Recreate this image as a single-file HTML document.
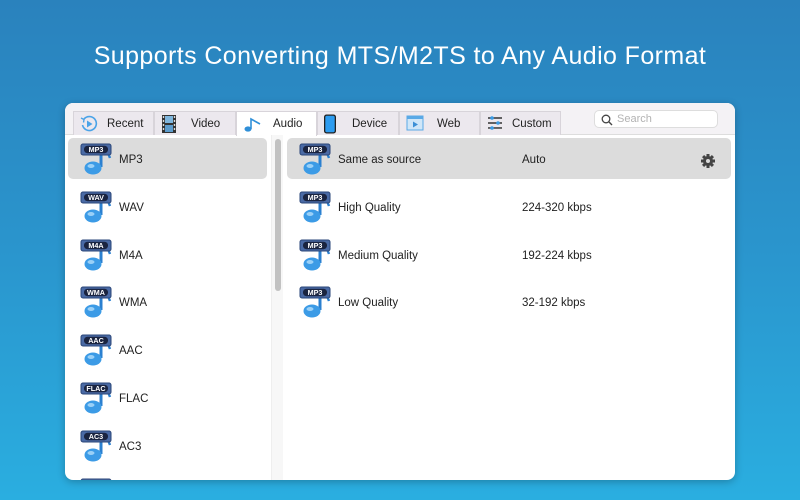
<!DOCTYPE html>
<html><head><meta charset="utf-8"><style>
*{margin:0;padding:0;box-sizing:border-box}
body{width:800px;height:500px;overflow:hidden;font-family:"Liberation Sans",sans-serif;background:linear-gradient(180deg,#2a82bd 0%,#2a95cd 50%,#2aaee0 100%);position:relative}
h1{position:absolute;top:42px;left:0;width:800px;text-align:center;color:#fff;font-weight:400;font-size:25px;letter-spacing:0.4px}
.win{position:absolute;left:65px;top:103px;width:670px;height:377px;background:#fff;border-radius:8px;overflow:hidden;box-shadow:0 2px 8px rgba(0,0,0,.25)}
.bar{position:absolute;left:0;top:0;width:670px;height:32px;background:#f4f2f5;border-bottom:1px solid #ddd}
.tab{position:absolute;top:8px;height:24px;background:#ece8ee;border:1px solid #d8d4da;border-bottom:none;font-size:11.5px;color:#222;line-height:25px}
.tab.on{background:#fff;height:25px}
.tab span{position:absolute}
.tab svg{position:absolute;top:3px;left:6px}
.search{position:absolute;left:529px;top:7px;width:124px;height:18px;background:#fff;border:1px solid #ddd;border-radius:5px;font-size:11px;color:#b3b3b3;line-height:17px;padding-left:22px}
.search svg{position:absolute;left:6px;top:3px}
.left{position:absolute;left:0;top:32px;width:218px;height:345px;border-right:1px solid #e5e5e5}
.sb{position:absolute;left:206px;top:0;width:12px;height:345px;background:#f7f7f7;border-left:1px solid #eee}
.sb div{position:absolute;left:3px;top:4px;width:6px;height:152px;background:#c2c2c2;border-radius:3px}
.row{position:absolute;height:41px;font-size:11.5px;color:#222;line-height:45px}
.row.sel{background:#dcdcdc;border-radius:5px}
.ic{position:absolute;top:4px;width:34px;height:34px}
.right{position:absolute;left:219px;top:32px;width:451px;height:345px}
</style></head><body>
<h1>Supports Converting MTS/M2TS to Any Audio Format</h1>
<div class="win">
<div class="bar">
 <div class="tab" style="left:8px;width:81px"><svg width="18" height="18" viewBox="0 0 18 18"><path d="M4 4A7 7 0 1 1 2.5 10" fill="none" stroke="#4aa3e8" stroke-width="1.6"/><path d="M1 3l3 1.5-0.5 3" fill="none" stroke="#4aa3e8" stroke-width="1.4"/><path d="M7 5.5v7l5.5-3.5z" fill="#4aa3e8"/></svg><span style="left:33px">Recent</span></div>
 <div class="tab" style="left:89px;width:82px"><svg width="16" height="18" viewBox="0 0 16 18"><rect x="1" y="0" width="14" height="18" fill="#333"/><rect x="4" y="1" width="8" height="7" fill="#7fb6dd"/><rect x="4" y="10" width="8" height="7" fill="#5d9ccc"/><g fill="#ddd"><rect x="1.8" y="1" width="1.4" height="2"/><rect x="1.8" y="5" width="1.4" height="2"/><rect x="1.8" y="9" width="1.4" height="2"/><rect x="1.8" y="13" width="1.4" height="2"/><rect x="12.8" y="1" width="1.4" height="2"/><rect x="12.8" y="5" width="1.4" height="2"/><rect x="12.8" y="9" width="1.4" height="2"/><rect x="12.8" y="13" width="1.4" height="2"/></g></svg><span style="left:36px">Video</span></div>
 <div class="tab on" style="left:171px;width:81px"><svg width="22" height="18" viewBox="0 0 22 18"><path d="M8 14V4l9 5" fill="none" stroke="#2f8fd8" stroke-width="1.6"/><ellipse cx="5" cy="14" rx="3.5" ry="2.6" fill="#2f8fd8"/></svg><span style="left:36px">Audio</span></div>
 <div class="tab" style="left:252px;width:82px"><svg width="14" height="20" viewBox="0 0 14 20" style="top:2px;left:5px"><rect x="1" y="0.5" width="12" height="19" rx="2.5" fill="#222"/><rect x="2.3" y="1.8" width="9.4" height="16.4" rx="1.5" fill="#2d9cf0"/></svg><span style="left:34px">Device</span></div>
 <div class="tab" style="left:334px;width:81px"><svg width="18" height="16" viewBox="0 0 18 16"><rect x="1" y="1" width="16" height="14" fill="#cfe6f8" stroke="#5aa9e6"/><rect x="1" y="1" width="16" height="3" fill="#5aa9e6"/><path d="M7 6.5v6l5-3z" fill="#3b8fd6"/></svg><span style="left:37px">Web</span></div>
 <div class="tab" style="left:415px;width:81px"><svg width="16" height="16" viewBox="0 0 16 16"><g stroke="#333" stroke-width="1.4"><line x1="1" y1="3" x2="15" y2="3"/><line x1="1" y1="8" x2="15" y2="8"/><line x1="1" y1="13" x2="15" y2="13"/></g><g fill="#3a9be6"><circle cx="5" cy="3" r="1.8"/><circle cx="11" cy="8" r="1.8"/><circle cx="5" cy="13" r="1.8"/></g></svg><span style="left:31px">Custom</span></div>
 <div class="search"><svg width="12" height="12" viewBox="0 0 12 12"><circle cx="5" cy="5" r="3.8" fill="none" stroke="#444" stroke-width="1.3"/><line x1="7.8" y1="7.8" x2="11" y2="11" stroke="#444" stroke-width="1.4"/></svg>Search</div>
</div>
<div class="left">
 <div class="sb"><div></div></div>
 <div class="row sel" style="left:3px;top:3px;width:199px"></div>
 <div id="L"></div>
</div>
<div class="right">
 <div class="row sel" style="left:3px;top:3px;width:444px"></div>
 <div id="R"></div>
 <svg style="position:absolute;left:417px;top:19px" width="14" height="14" viewBox="0 0 14 14"><g fill="#444"><circle cx="7" cy="7" r="5"/><g transform="translate(7 7)"><rect x="-1.5" y="-7" width="3" height="14"/><rect x="-1.5" y="-7" width="3" height="14" transform="rotate(45)"/><rect x="-1.5" y="-7" width="3" height="14" transform="rotate(90)"/><rect x="-1.5" y="-7" width="3" height="14" transform="rotate(135)"/></g></g><circle cx="7" cy="7" r="2" fill="#dcdcdc"/></svg>
</div>
</div>
<script>
function icon(lbl){return '<svg class="ic" viewBox="0 0 34 34"><path d="M21 6 V25" stroke="#2b80d0" stroke-width="3"/><path d="M21 6 q7 3 9 10" stroke="#2b80d0" stroke-width="2.4" fill="none"/><ellipse cx="13" cy="26" rx="8.5" ry="6.5" fill="#3c9be6"/><ellipse cx="11" cy="24" rx="3.5" ry="2" fill="#9ad0f7"/><rect x="1" y="2" width="30" height="11" rx="2" fill="#4a6aa5" stroke="#2a4578"/><rect x="4" y="3.7" width="24" height="7.5" rx="3.5" fill="#1a2440"/><text x="16" y="10.2" font-size="7.2" font-weight="bold" fill="#fff" text-anchor="middle" font-family="Liberation Sans">'+lbl+'</text></svg>';}
var L=['MP3','WAV','M4A','WMA','AAC','FLAC','AC3','OGG'],h='';
L.forEach(function(n,i){h+='<div class="row" style="left:15px;top:'+(3+i*47.8)+'px;width:180px">'+icon(n)+'<span style="position:absolute;left:39px">'+n+'</span></div>';});
document.getElementById('L').innerHTML=h;
var R=[['Same as source','Auto'],['High Quality','224-320 kbps'],['Medium Quality','192-224 kbps'],['Low Quality','32-192 kbps']];h='';
R.forEach(function(r,i){h+='<div class="row" style="left:15px;top:'+(3+i*47.8)+'px;width:400px">'+icon('MP3')+'<span style="position:absolute;left:39px">'+r[0]+'</span><span style="position:absolute;left:223px">'+r[1]+'</span></div>';});
document.getElementById('R').innerHTML=h;
</script>
</body></html>
